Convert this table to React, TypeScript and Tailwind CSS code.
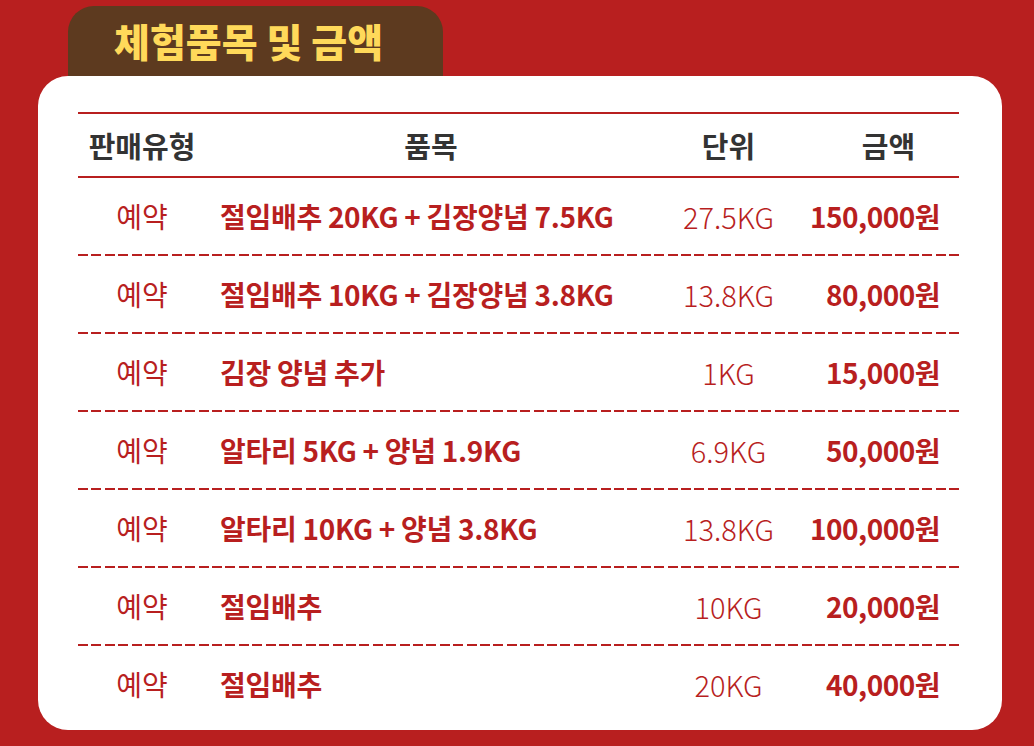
const ROWS = [
  { type: "예약", item: "절임배추 20KG + 김장양념 7.5KG", unit: "27.5KG", price: "150,000원" },
  { type: "예약", item: "절임배추 10KG + 김장양념 3.8KG", unit: "13.8KG", price: "80,000원" },
  { type: "예약", item: "김장 양념 추가", unit: "1KG", price: "15,000원" },
  { type: "예약", item: "알타리 5KG + 양념 1.9KG", unit: "6.9KG", price: "50,000원" },
  { type: "예약", item: "알타리 10KG + 양념 3.8KG", unit: "13.8KG", price: "100,000원" },
  { type: "예약", item: "절임배추", unit: "10KG", price: "20,000원" },
  { type: "예약", item: "절임배추", unit: "20KG", price: "40,000원" },
];

const font = "font-['Noto_Sans_CJK_KR','Noto_Sans',sans-serif]";

export default function App() {
  return (
    <div className={`w-[1034px] h-[746px] overflow-hidden bg-[#b81f1f] ${font}`}>
      <div className="ml-[68px] mt-[6px] flex h-[70px] w-[375px] items-center rounded-t-[26px] bg-[#5d3a1f] pl-[46px] pb-[2px]">
        <h2 className="text-[39px] font-black leading-none text-[#ffd95a]">
          체험품목 및 금액
        </h2>
      </div>

      <div className="ml-[38px] w-[964px] rounded-[30px] bg-white pl-[40px] pr-[43px] pt-[36px] pb-[8px]">
        <div className="h-[2px] bg-[#b81f1f]" />
        <div className="grid h-[62px] grid-cols-[128px_450px_145px_158px] items-center text-[29px] font-bold leading-none text-[#333333]">
          <div className="text-center">판매유형</div>
          <div className="text-center">품목</div>
          <div className="text-center">단위</div>
          <div className="pl-[17px] text-center">금액</div>
        </div>
        <div className="h-[2px] bg-[#b81f1f]" />

        {ROWS.map((row, i) => (
          <div key={i}>
            <div className="grid h-[76px] grid-cols-[128px_450px_145px_158px] items-center leading-none text-[#b81f1f]">
              <div className="text-center text-[28px] font-normal">{row.type}</div>
              <div className="pl-[14px] text-[28px] font-bold tracking-[-0.3px]">{row.item}</div>
              <div className="text-center text-[29px] font-light">{row.unit}</div>
              <div className="pr-[19px] text-right text-[28px] font-bold tracking-[-0.5px]">{row.price}</div>
            </div>
            {i < ROWS.length - 1 && (
              <div className="h-[2px] bg-[repeating-linear-gradient(90deg,#b81f1f_0_10px,transparent_10px_13.4px)]" />
            )}
          </div>
        ))}
      </div>
    </div>
  );
}
